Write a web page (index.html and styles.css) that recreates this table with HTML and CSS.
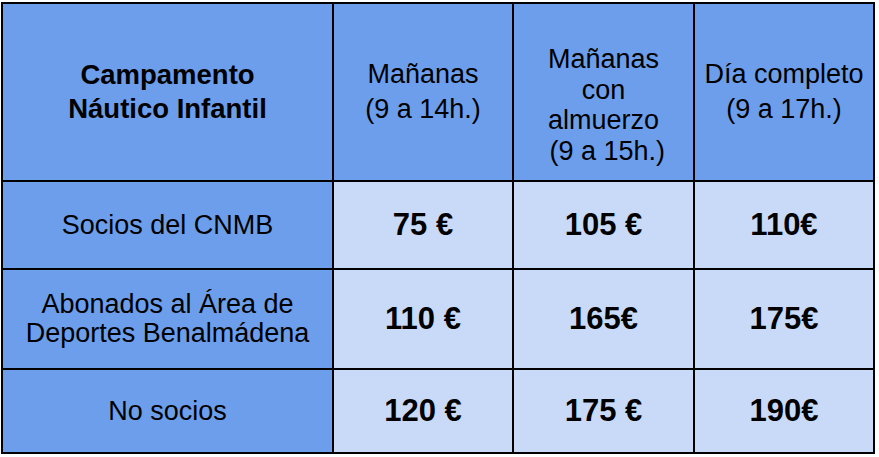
FILE: index.html
```html
<!DOCTYPE html>
<html lang="es">
<head>
<meta charset="utf-8">
<title>Campamento Náutico Infantil</title>
<link rel="stylesheet" href="styles.css">
</head>
<body>
<div class="grid" role="table">
  <div class="cell head title" role="columnheader">Campamento<br>Náutico Infantil</div>
  <div class="cell head spaced" role="columnheader">Mañanas<br>(9 a 14h.)</div>
  <div class="cell head tall" role="columnheader">Mañanas<br>con<br>almuerzo<br>&nbsp;(9 a 15h.)</div>
  <div class="cell head spaced" role="columnheader">Día completo<br>(9 a 17h.)</div>

  <div class="cell head" role="rowheader">Socios del CNMB</div>
  <div class="cell price" role="cell">75 €</div>
  <div class="cell price" role="cell">105 €</div>
  <div class="cell price" role="cell">110€</div>

  <div class="cell head" role="rowheader">Abonados al Área de<br>Deportes Benalmádena</div>
  <div class="cell price" role="cell">110 €</div>
  <div class="cell price" role="cell">165€</div>
  <div class="cell price" role="cell">175€</div>

  <div class="cell head" role="rowheader">No socios</div>
  <div class="cell price" role="cell">120 €</div>
  <div class="cell price" role="cell">175 €</div>
  <div class="cell price" role="cell">190€</div>
</div>
</body>
</html>
```

FILE: styles.css
```css
html, body {
  margin: 0;
  padding: 0;
  background: #ffffff;
}

body {
  font-family: "Liberation Sans", Arial, sans-serif;
  color: #000000;
}

.grid {
  display: grid;
  grid-template-columns: 329px 178px 179px 178px;
  grid-template-rows: 176px 86px 98px 82px;
  gap: 2px;
  padding: 2px;
  background: #000000;
  width: 870px;
  margin: 2px 0 0 1px;
}

.cell {
  display: flex;
  align-items: center;
  justify-content: center;
  text-align: center;
  font-size: 27px;
  line-height: 29px;
  background: #c9daf8;
}

.head {
  background: #6d9eeb;
}

.title {
  font-weight: bold;
  font-size: 27.5px;
  line-height: 34px;
}

.spaced {
  line-height: 35px;
}

.tall {
  line-height: 30.5px;
  padding-top: 26px;
  box-sizing: border-box;
}

.price {
  font-weight: bold;
  font-size: 31px;
  line-height: 34px;
}
```
